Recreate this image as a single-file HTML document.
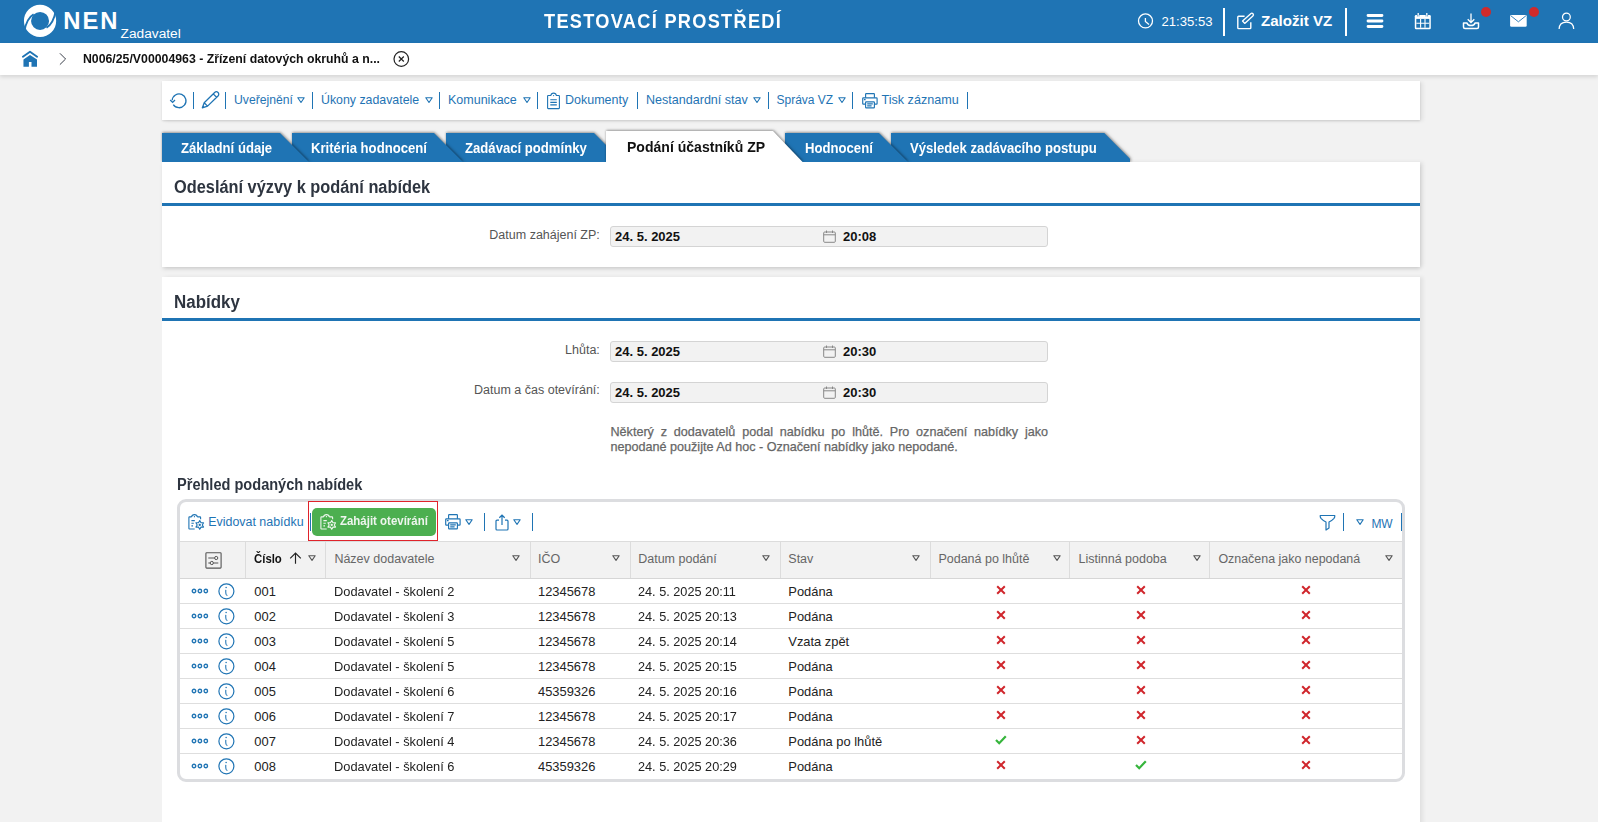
<!DOCTYPE html>
<html><head><meta charset="utf-8"><title>NEN</title>
<style>
html,body{margin:0;padding:0;}
body{width:1598px;height:822px;overflow:hidden;background:#f2f2f2;position:relative;font-family:"Liberation Sans",sans-serif;}
.t{position:absolute;white-space:nowrap;}
svg{overflow:visible;}
</style></head><body>
<div style="position:absolute;left:0px;top:0px;width:1598px;height:43px;background:#1f74b4"></div>
<svg style="position:absolute;left:22px;top:3px" width="36" height="36" viewBox="0 0 36 36"><circle cx="18.05" cy="17.95" r="12.55" fill="none" stroke="#fff" stroke-width="7.1"/><path d="M2.3 28.5 Q4.6 15.2 11.6 11.2" fill="none" stroke="#1f74b4" stroke-width="1.9"/><path d="M2.3 28.5 Q4.6 15.2 11.6 11.2" fill="none" stroke="#1f74b4" stroke-width="1.9" transform="rotate(180 18.05 17.95)"/></svg>
<div class="t" style="left:63.30px;top:9.15px;font-size:23.8px;line-height:23.8px;font-weight:700;color:#fff;letter-spacing:1.9px">NEN</div>
<div class="t" style="left:120.60px;top:27.00px;font-size:13.7px;line-height:13.7px;font-weight:400;color:#fff;">Zadavatel</div>
<div class="t" style="left:544.00px;top:11.20px;font-size:20.2px;line-height:20.2px;font-weight:700;color:#fff;letter-spacing:1.45px;transform:scaleX(0.9);transform-origin:0 0">TESTOVACÍ PROSTŘEDÍ</div>
<svg style="position:absolute;left:1137px;top:13px" width="17" height="17" viewBox="0 0 17 17"><circle cx="8.5" cy="7.9" r="7.0" fill="none" stroke="#fff" stroke-width="1.3"/><path d="M8.4 5.1 V8.4 L12 11.5" fill="none" stroke="#fff" stroke-width="1.3"/></svg>
<div class="t" style="left:1161.50px;top:15.11px;font-size:13.1px;line-height:13.1px;font-weight:400;color:#fff;">21:35:53</div>
<div style="position:absolute;left:1223px;top:8px;width:2.4px;height:28px;background:#fff"></div>
<svg style="position:absolute;left:1236px;top:12px" width="19" height="18" viewBox="0 0 19 18"><path d="M8.6 4.3 H2.6 Q1.8 4.3 1.8 5.1 V15.8 Q1.8 16.6 2.6 16.6 H14 Q14.8 16.6 14.8 15.8 V10.2" fill="none" stroke="#fff" stroke-width="1.4"/><g transform="translate(7.4,10.4) rotate(-42)"><path d="M0.3 -1.6 H11.3 A1.6 1.6 0 0 1 11.3 1.6 H0.3 Z" fill="none" stroke="#fff" stroke-width="1.35" stroke-linejoin="round"/></g></svg>
<div class="t" style="left:1261.00px;top:13.12px;font-size:15.1px;line-height:15.1px;font-weight:700;color:#fff;">Založit VZ</div>
<div style="position:absolute;left:1345px;top:8px;width:2.4px;height:28px;background:#fff"></div>
<svg style="position:absolute;left:1366px;top:13px" width="18" height="16" viewBox="0 0 18 16"><path d="M2 2.5 H16 M2 8 H16 M2 13.5 H16" stroke="#fff" stroke-width="2.8" stroke-linecap="round"/></svg>
<svg style="position:absolute;left:1414px;top:13px" width="18" height="17" viewBox="0 0 18 17"><rect x="0.8" y="2" width="16" height="14.2" rx="1.3" fill="#fff"/><rect x="2.3" y="5.9" width="13" height="8.8" fill="#1f74b4"/><path d="M6.6 5.9 V14.7 M11 5.9 V14.7 M2.3 10.3 H15.3" stroke="#fff" stroke-width="1.1"/><path d="M4.2 0 V3.2 M12.8 0 V3.2" stroke="#fff" stroke-width="1.3"/><path d="M3.4 2 V3.5 M5 2 V3.5 M12 2 V3.5 M13.6 2 V3.5" stroke="#1f74b4" stroke-width="0.6"/></svg>
<svg style="position:absolute;left:1462px;top:13px" width="18" height="17" viewBox="0 0 18 17"><path d="M9 0.5 V9 M5.7 6.2 L9 9.5 L12.3 6.2" fill="none" stroke="#fff" stroke-width="1.3"/><path d="M1.5 10 V14 Q1.5 15.5 3 15.5 H15 Q16.5 15.5 16.5 14 V10 H13 Q12.5 12.5 9 12.5 Q5.5 12.5 5 10 Z" fill="none" stroke="#fff" stroke-width="1.5" stroke-linejoin="round"/></svg>
<div style="position:absolute;left:1481px;top:7px;width:10px;height:10px;background:#cf2a2c;border-radius:50%"></div>
<svg style="position:absolute;left:1510px;top:14px" width="18" height="14" viewBox="0 0 18 14"><rect x="0.1" y="1" width="16.6" height="11.8" rx="1.3" fill="#fff"/><path d="M0.9 1.8 L8.4 7.8 L15.9 1.8" fill="none" stroke="#1f74b4" stroke-width="0.9"/></svg>
<div style="position:absolute;left:1529px;top:7px;width:10px;height:10px;background:#cf2a2c;border-radius:50%"></div>
<svg style="position:absolute;left:1558px;top:12px" width="17" height="18" viewBox="0 0 17 18"><circle cx="8.4" cy="5" r="3.9" fill="none" stroke="#fff" stroke-width="1.25"/><path d="M1.1 17 Q1.4 10.2 8.4 10.2 Q15.4 10.2 15.7 17" fill="none" stroke="#fff" stroke-width="1.25"/></svg>
<div style="position:absolute;left:0px;top:43px;width:1598px;height:32px;background:#fff;box-shadow:0 2px 4px rgba(0,0,0,.12)"></div>
<svg style="position:absolute;left:22px;top:51px" width="17" height="16" viewBox="0 0 17 16"><path d="M0.9 5.8 L8 0.7 L15.1 5.8" fill="none" stroke="#1f74b4" stroke-width="1.9" stroke-linecap="round" stroke-linejoin="round"/><path d="M1.45 8.4 L8 3.9 L15 8.4 V15.8 H9.5 V11.1 H6.9 V15.8 H1.45 Z" fill="#1f74b4"/></svg>
<svg style="position:absolute;left:58px;top:53px" width="9" height="13" viewBox="0 0 9 13"><path d="M1.9 0.3 L7.6 6 L1.9 11.6" fill="none" stroke="#3a3f4a" stroke-width="1"/></svg>
<div class="t" style="left:83.00px;top:52.20px;font-size:13px;line-height:13px;font-weight:700;color:#111;;transform:scaleX(0.945);transform-origin:0 0">N006/25/V00004963 - Zřízení datových okruhů a n...</div>
<svg style="position:absolute;left:393px;top:51px" width="17" height="17" viewBox="0 0 17 17"><circle cx="8.3" cy="8" r="7.3" fill="none" stroke="#222" stroke-width="1.2"/><path d="M5.8 5.5 L10.8 10.5 M10.8 5.5 L5.8 10.5" stroke="#222" stroke-width="1.2"/></svg>
<div style="position:absolute;left:162px;top:81px;width:1258px;height:39px;background:#fff;box-shadow:0 1px 2px rgba(0,0,0,.12), 3px 1px 4px rgba(0,0,0,.07)"></div>
<svg style="position:absolute;left:169px;top:92px" width="19" height="18" viewBox="0 0 19 18"><path d="M3.2 8.3 A6.9 6.9 0 1 1 4.3 12.6" fill="none" stroke="#1f74b4" stroke-width="1.3"/><path d="M1.2 8 L3.6 10.4 L6 8" fill="none" stroke="#1f74b4" stroke-width="1.3"/></svg>
<div style="position:absolute;left:193px;top:92px;width:1.3px;height:16.5px;background:#1f74b4"></div>
<svg style="position:absolute;left:201px;top:91px" width="19" height="19" viewBox="0 0 19 19"><g transform="translate(1.3,16.9) rotate(-44.3)"><path d="M0 0 L5 -2.4 H19.6 A2.4 2.4 0 0 1 19.6 2.4 H5 Z M5 -2.4 V2.4 M17.6 -2.4 V2.4" fill="none" stroke="#1f74b4" stroke-width="1.3" stroke-linejoin="round"/><path d="M0 0 L2.2 -1.05 V1.05 Z" fill="#1f74b4"/></g></svg>
<div style="position:absolute;left:225px;top:92px;width:1.3px;height:16.5px;background:#1f74b4"></div>
<div class="t" style="left:234.00px;top:93.97px;font-size:12.2px;line-height:12.2px;font-weight:400;color:#1f74b4;">Uveřejnění</div>
<svg style="position:absolute;left:296.5px;top:97px" width="8" height="6" viewBox="0 0 8 6"><path d="M0.8 0.8 H7.2 L4 5.5 Z" fill="none" stroke="#1f74b4" stroke-width="1.1" stroke-linejoin="round"/></svg>
<div style="position:absolute;left:312px;top:92px;width:1.3px;height:16.5px;background:#1f74b4"></div>
<div class="t" style="left:321.00px;top:93.85px;font-size:12.35px;line-height:12.35px;font-weight:400;color:#1f74b4;">Úkony zadavatele</div>
<svg style="position:absolute;left:424.5px;top:97px" width="8" height="6" viewBox="0 0 8 6"><path d="M0.8 0.8 H7.2 L4 5.5 Z" fill="none" stroke="#1f74b4" stroke-width="1.1" stroke-linejoin="round"/></svg>
<div style="position:absolute;left:438.5px;top:92px;width:1.3px;height:16.5px;background:#1f74b4"></div>
<div class="t" style="left:448.00px;top:93.72px;font-size:12.5px;line-height:12.5px;font-weight:400;color:#1f74b4;">Komunikace</div>
<svg style="position:absolute;left:522.5px;top:97px" width="8" height="6" viewBox="0 0 8 6"><path d="M0.8 0.8 H7.2 L4 5.5 Z" fill="none" stroke="#1f74b4" stroke-width="1.1" stroke-linejoin="round"/></svg>
<div style="position:absolute;left:536.5px;top:92px;width:1.3px;height:16.5px;background:#1f74b4"></div>
<svg style="position:absolute;left:546px;top:91px" width="15" height="19" viewBox="0 0 15 19"><g fill="none" stroke="#1f74b4" stroke-width="1.1" stroke-linejoin="round"><path d="M4.9 4.5 H2.2 Q1.6 4.5 1.6 5.1 V17 Q1.6 17.6 2.2 17.6 H12.8 Q13.4 17.6 13.4 17 V5.1 Q13.4 4.5 12.8 4.5 H10.3 Q10 2.1 7.6 2.1 Q5.2 2.1 4.9 4.5 Z"/><path d="M4.3 8.8 H10.8 M4.3 11.4 H10.8 M4.3 13.9 H10.8"/></g><circle cx="7.6" cy="4.6" r="0.6" fill="#1f74b4"/></svg>
<div class="t" style="left:565.00px;top:93.72px;font-size:12.5px;line-height:12.5px;font-weight:400;color:#1f74b4;">Dokumenty</div>
<div style="position:absolute;left:637px;top:92px;width:1.3px;height:16.5px;background:#1f74b4"></div>
<div class="t" style="left:646.00px;top:93.68px;font-size:12.55px;line-height:12.55px;font-weight:400;color:#1f74b4;">Nestandardní stav</div>
<svg style="position:absolute;left:753px;top:97px" width="8" height="6" viewBox="0 0 8 6"><path d="M0.8 0.8 H7.2 L4 5.5 Z" fill="none" stroke="#1f74b4" stroke-width="1.1" stroke-linejoin="round"/></svg>
<div style="position:absolute;left:767.5px;top:92px;width:1.3px;height:16.5px;background:#1f74b4"></div>
<div class="t" style="left:776.50px;top:94.14px;font-size:12.0px;line-height:12.0px;font-weight:400;color:#1f74b4;">Správa VZ</div>
<svg style="position:absolute;left:838px;top:97px" width="8" height="6" viewBox="0 0 8 6"><path d="M0.8 0.8 H7.2 L4 5.5 Z" fill="none" stroke="#1f74b4" stroke-width="1.1" stroke-linejoin="round"/></svg>
<div style="position:absolute;left:852px;top:92px;width:1.3px;height:16.5px;background:#1f74b4"></div>
<svg style="position:absolute;z-index:9;left:861px;top:92px" width="18" height="18" viewBox="0 0 18 18"><g fill="none" stroke="#1f74b4" stroke-width="1.15" stroke-linejoin="round"><path d="M4.6 5.8 V2.2 Q4.6 1.6 5.2 1.6 H12.8 Q13.4 1.6 13.4 2.2 V5.8"/><path d="M4.6 12.1 H2.3 Q1.7 12.1 1.7 11.5 V6.5 Q1.7 5.8 2.4 5.8 H15.4 Q16.1 5.8 16.1 6.5 V11.5 Q16.1 12.1 15.5 12.1 H13.4"/><rect x="4.6" y="9.8" width="8.8" height="6.1" rx="0.6"/><path d="M6.2 11.8 H11.8 M6.2 13.8 H10.6 M2.9 7.6 H4.6"/></g></svg>
<div class="t" style="left:881.50px;top:93.63px;font-size:12.6px;line-height:12.6px;font-weight:400;color:#1f74b4;">Tisk záznamu</div>
<div style="position:absolute;left:967px;top:92px;width:1.3px;height:16.5px;background:#1f74b4"></div>
<div style="position:absolute;left:0;top:100px;width:1598px;height:62px;overflow:hidden;z-index:10"><div style="position:absolute;left:0;top:-100px;width:1598px;height:822px"><div style="position:absolute;left:162px;top:133px;width:147px;height:29px;z-index:20;filter:drop-shadow(0 -1px 1px rgba(0,0,0,.2)) drop-shadow(1.6px 0.6px 1.6px rgba(0,0,0,.32))"><div style="width:100%;height:100%;background:#1f74b4;clip-path:polygon(0 0,118px 0,100% 29px,100% 100%,0 100%)"></div></div>
<div class="t" style="left:181.00px;top:140.53px;font-size:14.5px;line-height:14.5px;font-weight:700;color:#fff;z-index:21;transform:scaleX(0.905);transform-origin:0 0">Základní údaje</div>
<div style="position:absolute;left:292px;top:133px;width:171px;height:29px;z-index:18;filter:drop-shadow(0 -1px 1px rgba(0,0,0,.2)) drop-shadow(1.6px 0.6px 1.6px rgba(0,0,0,.32))"><div style="width:100%;height:100%;background:#1f74b4;clip-path:polygon(0 0,142px 0,100% 29px,100% 100%,0 100%)"></div></div>
<div class="t" style="left:311.40px;top:140.53px;font-size:14.5px;line-height:14.5px;font-weight:700;color:#fff;z-index:19;transform:scaleX(0.905);transform-origin:0 0">Kritéria hodnocení</div>
<div style="position:absolute;left:446px;top:133px;width:177px;height:29px;z-index:16;filter:drop-shadow(0 -1px 1px rgba(0,0,0,.2)) drop-shadow(1.6px 0.6px 1.6px rgba(0,0,0,.32))"><div style="width:100%;height:100%;background:#1f74b4;clip-path:polygon(0 0,148px 0,100% 29px,100% 100%,0 100%)"></div></div>
<div class="t" style="left:465.20px;top:140.53px;font-size:14.5px;line-height:14.5px;font-weight:700;color:#fff;z-index:17;transform:scaleX(0.905);transform-origin:0 0">Zadávací podmínky</div>
<div style="position:absolute;left:785px;top:133px;width:123px;height:29px;z-index:14;filter:drop-shadow(0 -1px 1px rgba(0,0,0,.2)) drop-shadow(1.6px 0.6px 1.6px rgba(0,0,0,.32))"><div style="width:100%;height:100%;background:#1f74b4;clip-path:polygon(0 0,94px 0,100% 29px,100% 100%,0 100%)"></div></div>
<div class="t" style="left:804.50px;top:140.53px;font-size:14.5px;line-height:14.5px;font-weight:700;color:#fff;z-index:15;transform:scaleX(0.905);transform-origin:0 0">Hodnocení</div>
<div style="position:absolute;left:891px;top:133px;width:239.0px;height:29px;z-index:12;filter:drop-shadow(0 -1px 1px rgba(0,0,0,.2)) drop-shadow(1.6px 0.6px 1.6px rgba(0,0,0,.32))"><div style="width:100%;height:100%;background:#1f74b4;clip-path:polygon(0 0,213.29999999999995px 0,100% 25.7px,100% 100%,0 100%)"></div></div>
<div class="t" style="left:910.00px;top:140.53px;font-size:14.5px;line-height:14.5px;font-weight:700;color:#fff;z-index:13;transform:scaleX(0.905);transform-origin:0 0">Výsledek zadávacího postupu</div>
<div style="position:absolute;left:606px;top:131px;width:196.60000000000002px;height:31px;z-index:30;filter:drop-shadow(0 -1px 1px rgba(0,0,0,.2)) drop-shadow(1.6px 0.6px 1.6px rgba(0,0,0,.32))"><div style="width:100%;height:100%;background:#fff;clip-path:polygon(0 0,167px 0,100% 31px,100% 100%,0 100%)"></div></div>
<div class="t" style="left:626.60px;top:139.00px;font-size:15px;line-height:15px;font-weight:700;color:#111;z-index:31;transform:scaleX(0.936);transform-origin:0 0">Podání účastníků ZP</div>
</div></div><div style="position:absolute;left:162px;top:162px;width:1258px;height:104.5px;background:#fff;box-shadow:0 2.5px 4px -0.5px rgba(0,0,0,.13), 3px 0 4px rgba(0,0,0,.07);z-index:5"></div>
<div class="t" style="left:174.00px;top:177.66px;font-size:18px;line-height:18px;font-weight:700;color:#2e3540;z-index:6;transform:scaleX(0.908);transform-origin:0 0">Odeslání výzvy k podání nabídek</div>
<div style="position:absolute;left:162px;top:203px;width:1258px;height:3px;background:#1f74b4;z-index:6"></div>
<div class="t" style="right:998.20px;text-align:right;top:229.22px;font-size:12.5px;line-height:12.5px;font-weight:400;color:#555;z-index:7">Datum zahájení ZP:</div>
<div style="position:absolute;left:610px;top:226px;width:438px;height:20.5px;box-sizing:border-box;background:#f2f2f2;border:1px solid #d4d4d4;border-radius:3px;z-index:6"></div>
<div class="t" style="left:615.00px;top:230.00px;font-size:13px;line-height:13px;font-weight:700;color:#111;z-index:7">24. 5. 2025</div>
<svg style="position:absolute;z-index:7;left:823px;top:230px" width="13" height="13" viewBox="0 0 13 13"><rect x="0.7" y="2" width="11.6" height="10.3" rx="1" fill="none" stroke="#888" stroke-width="1"/><path d="M0.7 4.8 H12.3 M3.5 0.5 V3 M9.5 0.5 V3" stroke="#888" stroke-width="1"/></svg>
<div class="t" style="left:843.00px;top:230.00px;font-size:13px;line-height:13px;font-weight:700;color:#111;z-index:7">20:08</div>
<div style="position:absolute;left:162px;top:277px;width:1258px;height:560px;background:#fff;box-shadow:3px 0 4px rgba(0,0,0,.07);z-index:5"></div>
<div class="t" style="left:174.00px;top:292.76px;font-size:18px;line-height:18px;font-weight:700;color:#2e3540;z-index:6;transform:scaleX(0.94);transform-origin:0 0">Nabídky</div>
<div style="position:absolute;left:162px;top:318px;width:1258px;height:3px;background:#1f74b4;z-index:6"></div>
<div class="t" style="right:998.20px;text-align:right;top:343.62px;font-size:12.5px;line-height:12.5px;font-weight:400;color:#555;z-index:7">Lhůta:</div>
<div style="position:absolute;left:610px;top:341px;width:438px;height:20.5px;box-sizing:border-box;background:#f2f2f2;border:1px solid #d4d4d4;border-radius:3px;z-index:6"></div>
<div class="t" style="left:615.00px;top:345.00px;font-size:13px;line-height:13px;font-weight:700;color:#111;z-index:7">24. 5. 2025</div>
<svg style="position:absolute;z-index:7;left:823px;top:345px" width="13" height="13" viewBox="0 0 13 13"><rect x="0.7" y="2" width="11.6" height="10.3" rx="1" fill="none" stroke="#888" stroke-width="1"/><path d="M0.7 4.8 H12.3 M3.5 0.5 V3 M9.5 0.5 V3" stroke="#888" stroke-width="1"/></svg>
<div class="t" style="left:843.00px;top:345.00px;font-size:13px;line-height:13px;font-weight:700;color:#111;z-index:7">20:30</div>
<div class="t" style="right:998.20px;text-align:right;top:384.22px;font-size:12.5px;line-height:12.5px;font-weight:400;color:#555;z-index:7">Datum a čas otevírání:</div>
<div style="position:absolute;left:610px;top:382px;width:438px;height:20.5px;box-sizing:border-box;background:#f2f2f2;border:1px solid #d4d4d4;border-radius:3px;z-index:6"></div>
<div class="t" style="left:615.00px;top:386.00px;font-size:13px;line-height:13px;font-weight:700;color:#111;z-index:7">24. 5. 2025</div>
<svg style="position:absolute;z-index:7;left:823px;top:386px" width="13" height="13" viewBox="0 0 13 13"><rect x="0.7" y="2" width="11.6" height="10.3" rx="1" fill="none" stroke="#888" stroke-width="1"/><path d="M0.7 4.8 H12.3 M3.5 0.5 V3 M9.5 0.5 V3" stroke="#888" stroke-width="1"/></svg>
<div class="t" style="left:843.00px;top:386.00px;font-size:13px;line-height:13px;font-weight:700;color:#111;z-index:7">20:30</div>
<div class="t" style="left:610.5px;top:425.3px;width:437.5px;font-size:12.6px;line-height:15px;color:#666;-webkit-text-stroke:0.25px #666;text-align:justify;text-align-last:left;white-space:normal;z-index:7">Některý z dodavatelů podal nabídku po lhůtě. Pro označení nabídky jako nepodané použijte Ad hoc - Označení nabídky jako nepodané.</div>
<div class="t" style="left:177.00px;top:477.06px;font-size:16px;line-height:16px;font-weight:700;color:#2e3540;z-index:7;transform:scaleX(0.91);transform-origin:0 0">Přehled podaných nabídek</div>
<div style="position:absolute;left:177px;top:499px;width:1228px;height:283px;box-sizing:border-box;border:3px solid #dcdde0;border-radius:9px;background:#fff;z-index:7"></div>
<svg style="position:absolute;z-index:9;left:183px;top:508px" width="27" height="27" viewBox="0 0 27 27"><g fill="none" stroke="#1f74b4" stroke-width="1.1" stroke-linejoin="round"><path d="M14.3 8.9 H17 Q17.6 8.9 17.6 9.5 V11.2 M8.6 8.9 H6.5 Q5.9 8.9 5.9 9.5 V20.4 Q5.9 21 6.5 21 H11.7 M8.6 8.9 Q8.9 6.6 11.45 6.6 Q14 6.6 14.3 8.9"/><path d="M8.4 12.6 H11.8 M8.4 15.3 H10.8 M8.4 17.9 H10"/><polygon points="16.75,12.50 18.02,14.69 20.56,14.70 19.30,16.90 20.56,19.10 18.02,19.11 16.75,21.30 15.48,19.11 12.94,19.10 14.20,16.90 12.94,14.70 15.47,14.69"/></g><circle cx="11.45" cy="8.7" r="0.65" fill="#1f74b4"/><circle cx="16.75" cy="16.9" r="1.15" fill="#1f74b4"/></svg>
<div class="t" style="left:208.20px;top:516.26px;font-size:12.45px;line-height:12.45px;font-weight:400;color:#1f74b4;z-index:8;">Evidovat nabídku</div>
<div style="position:absolute;left:310px;top:513px;width:1.3px;height:17.7px;background:#1f74b4;z-index:8;"></div>
<div style="position:absolute;left:308px;top:501px;width:130px;height:40px;box-sizing:border-box;border:1px solid #e0232b;z-index:8;"></div>
<div style="position:absolute;left:312.2px;top:508.2px;width:124px;height:27.6px;background:#4caf50;border-radius:5px;z-index:8;"></div>
<svg style="position:absolute;z-index:9;left:314.5px;top:507.8px" width="27" height="27" viewBox="0 0 27 27"><g fill="none" stroke="#eef6ee" stroke-width="1.1" stroke-linejoin="round"><path d="M14.3 8.9 H17 Q17.6 8.9 17.6 9.5 V11.2 M8.6 8.9 H6.5 Q5.9 8.9 5.9 9.5 V20.4 Q5.9 21 6.5 21 H11.7 M8.6 8.9 Q8.9 6.6 11.45 6.6 Q14 6.6 14.3 8.9"/><path d="M8.4 12.6 H11.8 M8.4 15.3 H10.8 M8.4 17.9 H10"/><polygon points="16.75,12.50 18.02,14.69 20.56,14.70 19.30,16.90 20.56,19.10 18.02,19.11 16.75,21.30 15.48,19.11 12.94,19.10 14.20,16.90 12.94,14.70 15.47,14.69"/></g><circle cx="11.45" cy="8.7" r="0.65" fill="#eef6ee"/><circle cx="16.75" cy="16.9" r="1.15" fill="#eef6ee"/></svg>
<div class="t" style="left:339.70px;top:515.36px;font-size:12.8px;line-height:12.8px;font-weight:700;color:#eef5ee;z-index:9;transform:scaleX(0.895);transform-origin:0 0">Zahájit otevírání</div>
<svg style="position:absolute;z-index:9;left:444px;top:513px" width="18" height="18" viewBox="0 0 18 18"><g fill="none" stroke="#1f74b4" stroke-width="1.15" stroke-linejoin="round"><path d="M4.6 5.8 V2.2 Q4.6 1.6 5.2 1.6 H12.8 Q13.4 1.6 13.4 2.2 V5.8"/><path d="M4.6 12.1 H2.3 Q1.7 12.1 1.7 11.5 V6.5 Q1.7 5.8 2.4 5.8 H15.4 Q16.1 5.8 16.1 6.5 V11.5 Q16.1 12.1 15.5 12.1 H13.4"/><rect x="4.6" y="9.8" width="8.8" height="6.1" rx="0.6"/><path d="M6.2 11.8 H11.8 M6.2 13.8 H10.6 M2.9 7.6 H4.6"/></g></svg>
<svg style="position:absolute;z-index:9;left:465.2px;top:519px" width="8" height="6" viewBox="0 0 8 6"><path d="M0.8 0.8 H7.2 L4 5.4 Z" fill="none" stroke="#1f74b4" stroke-width="1.1" stroke-linejoin="round"/></svg>
<div style="position:absolute;left:484px;top:513px;width:1.3px;height:17.7px;background:#1f74b4;z-index:8;"></div>
<svg style="position:absolute;z-index:9;left:494.5px;top:513.5px" width="14" height="17" viewBox="0 0 14 17"><path d="M4 6.2 H2 Q1 6.2 1 7.2 V15 Q1 16 2 16 H12 Q13 16 13 15 V7.2 Q13 6.2 12 6.2 H10" fill="none" stroke="#1f74b4" stroke-width="1.2"/><path d="M7 11 V1.2 M4.3 3.8 L7 1.2 L9.7 3.8" fill="none" stroke="#1f74b4" stroke-width="1.2"/></svg>
<svg style="position:absolute;z-index:9;left:513px;top:519px" width="8" height="6" viewBox="0 0 8 6"><path d="M0.8 0.8 H7.2 L4 5.4 Z" fill="none" stroke="#1f74b4" stroke-width="1.1" stroke-linejoin="round"/></svg>
<div style="position:absolute;left:532px;top:513px;width:1.3px;height:17.7px;background:#1f74b4;z-index:8;"></div>
<svg style="position:absolute;z-index:9;left:1319px;top:513.5px" width="17" height="17" viewBox="0 0 17 17"><path d="M1.2 1.5 H15.8 Q16 3 15 4.3 Q13 6.5 10 8 V14 L7 16 V8 Q4 6.5 2 4.3 Q1 3 1.2 1.5 Z" fill="none" stroke="#1f74b4" stroke-width="1.2" stroke-linejoin="round"/></svg>
<div style="position:absolute;left:1343px;top:513px;width:1.3px;height:17.7px;background:#1f74b4;z-index:8;"></div>
<svg style="position:absolute;z-index:9;left:1355.5px;top:519px" width="8" height="6" viewBox="0 0 8 6"><path d="M0.8 0.8 H7.2 L4 5.4 Z" fill="none" stroke="#1f74b4" stroke-width="1.1" stroke-linejoin="round"/></svg>
<div class="t" style="left:1371.50px;top:517.64px;font-size:12px;line-height:12px;font-weight:400;color:#1f74b4;z-index:8;letter-spacing:-0.3px">MW</div>
<div style="position:absolute;left:1401px;top:513px;width:1.3px;height:17.7px;background:#1f74b4;z-index:8;"></div>
<div style="position:absolute;left:180px;top:541px;width:1222px;height:37.5px;background:#f2f2f2;border-top:1px solid #dcdcdc;border-bottom:1.3px solid #d6d6d6;box-sizing:border-box;z-index:8;"></div>
<div style="position:absolute;left:245.4px;top:542px;width:1px;height:36px;background:#dcdcdc;z-index:8;"></div>
<div style="position:absolute;left:325.1px;top:542px;width:1px;height:36px;background:#dcdcdc;z-index:8;"></div>
<div style="position:absolute;left:529.5px;top:542px;width:1px;height:36px;background:#dcdcdc;z-index:8;"></div>
<div style="position:absolute;left:629.5px;top:542px;width:1px;height:36px;background:#dcdcdc;z-index:8;"></div>
<div style="position:absolute;left:779.5px;top:542px;width:1px;height:36px;background:#dcdcdc;z-index:8;"></div>
<div style="position:absolute;left:929.5px;top:542px;width:1px;height:36px;background:#dcdcdc;z-index:8;"></div>
<div style="position:absolute;left:1069.3px;top:542px;width:1px;height:36px;background:#dcdcdc;z-index:8;"></div>
<div style="position:absolute;left:1209.2px;top:542px;width:1px;height:36px;background:#dcdcdc;z-index:8;"></div>
<svg style="position:absolute;z-index:9;left:204.5px;top:551.5px" width="17" height="17" viewBox="0 0 17 17"><rect x="0.9" y="0.7" width="15.2" height="15.4" rx="0.8" fill="none" stroke="#555" stroke-width="1.1"/><path d="M3.3 6 H9.6 M3.3 11 H5.2 M8.5 11 H13.3" stroke="#555" stroke-width="1"/><circle cx="11.2" cy="6" r="1.6" fill="none" stroke="#555" stroke-width="1"/><circle cx="6.8" cy="11" r="1.6" fill="none" stroke="#555" stroke-width="1"/></svg>
<div class="t" style="left:253.60px;top:551.50px;font-size:13px;line-height:13px;font-weight:700;color:#111;z-index:8;;transform:scaleX(0.875);transform-origin:0 0">Číslo</div>
<svg style="position:absolute;z-index:9;left:288.5px;top:551.5px" width="13" height="12" viewBox="0 0 13 12"><path d="M6.5 11.8 V1.2 M1.2 6.3 L6.5 1 L11.8 6.3" fill="none" stroke="#222" stroke-width="1.15"/></svg>
<div class="t" style="left:334.40px;top:552.92px;font-size:12.5px;line-height:12.5px;font-weight:400;color:#666;z-index:8;">Název dodavatele</div>
<div class="t" style="left:538.00px;top:552.92px;font-size:12.5px;line-height:12.5px;font-weight:400;color:#666;z-index:8;">IČO</div>
<div class="t" style="left:638.20px;top:552.92px;font-size:12.5px;line-height:12.5px;font-weight:400;color:#666;z-index:8;">Datum podání</div>
<div class="t" style="left:788.30px;top:552.92px;font-size:12.5px;line-height:12.5px;font-weight:400;color:#666;z-index:8;">Stav</div>
<div class="t" style="left:938.40px;top:552.92px;font-size:12.5px;line-height:12.5px;font-weight:400;color:#666;z-index:8;">Podaná po lhůtě</div>
<div class="t" style="left:1078.50px;top:552.92px;font-size:12.5px;line-height:12.5px;font-weight:400;color:#666;z-index:8;">Listinná podoba</div>
<div class="t" style="left:1218.40px;top:552.96px;font-size:12.45px;line-height:12.45px;font-weight:400;color:#666;z-index:8;">Označena jako nepodaná</div>
<svg style="position:absolute;z-index:9;left:308.4px;top:555px" width="8" height="6" viewBox="0 0 8 6"><path d="M0.8 0.8 H7.2 L4 5.4 Z" fill="none" stroke="#555" stroke-width="1.1" stroke-linejoin="round"/></svg>
<svg style="position:absolute;z-index:9;left:512.4px;top:555px" width="8" height="6" viewBox="0 0 8 6"><path d="M0.8 0.8 H7.2 L4 5.4 Z" fill="none" stroke="#555" stroke-width="1.1" stroke-linejoin="round"/></svg>
<svg style="position:absolute;z-index:9;left:612.3px;top:555px" width="8" height="6" viewBox="0 0 8 6"><path d="M0.8 0.8 H7.2 L4 5.4 Z" fill="none" stroke="#555" stroke-width="1.1" stroke-linejoin="round"/></svg>
<svg style="position:absolute;z-index:9;left:762px;top:555px" width="8" height="6" viewBox="0 0 8 6"><path d="M0.8 0.8 H7.2 L4 5.4 Z" fill="none" stroke="#555" stroke-width="1.1" stroke-linejoin="round"/></svg>
<svg style="position:absolute;z-index:9;left:912.2px;top:555px" width="8" height="6" viewBox="0 0 8 6"><path d="M0.8 0.8 H7.2 L4 5.4 Z" fill="none" stroke="#555" stroke-width="1.1" stroke-linejoin="round"/></svg>
<svg style="position:absolute;z-index:9;left:1052.5px;top:555px" width="8" height="6" viewBox="0 0 8 6"><path d="M0.8 0.8 H7.2 L4 5.4 Z" fill="none" stroke="#555" stroke-width="1.1" stroke-linejoin="round"/></svg>
<svg style="position:absolute;z-index:9;left:1193px;top:555px" width="8" height="6" viewBox="0 0 8 6"><path d="M0.8 0.8 H7.2 L4 5.4 Z" fill="none" stroke="#555" stroke-width="1.1" stroke-linejoin="round"/></svg>
<svg style="position:absolute;z-index:9;left:1384.6px;top:555px" width="8" height="6" viewBox="0 0 8 6"><path d="M0.8 0.8 H7.2 L4 5.4 Z" fill="none" stroke="#555" stroke-width="1.1" stroke-linejoin="round"/></svg>
<div style="position:absolute;left:180px;top:603px;width:1222px;height:1px;background:#dedede;z-index:8;"></div>
<svg style="position:absolute;z-index:9;left:191px;top:587.8px" width="18" height="6" viewBox="0 0 18 6"><circle cx="3.0" cy="3" r="1.75" fill="none" stroke="#1f74b4" stroke-width="1.3"/><circle cx="8.9" cy="3" r="1.75" fill="none" stroke="#1f74b4" stroke-width="1.3"/><circle cx="14.8" cy="3" r="1.75" fill="none" stroke="#1f74b4" stroke-width="1.3"/></svg>
<svg style="position:absolute;z-index:9;left:217.5px;top:582.5px" width="17" height="17" viewBox="0 0 17 17"><circle cx="8.4" cy="8.3" r="7.5" fill="none" stroke="#1f74b4" stroke-width="1.2"/><circle cx="8.1" cy="4.5" r="0.75" fill="#1f74b4"/><path d="M7.8 6.9 Q7.6 9.5 8 11.2 Q8.3 12.2 9.4 12.6" fill="none" stroke="#1f74b4" stroke-width="1.05"/></svg>
<div class="t" style="left:254.30px;top:586.08px;font-size:12.9px;line-height:12.9px;font-weight:400;color:#222;z-index:8;">001</div>
<div class="t" style="left:334.40px;top:586.08px;font-size:12.9px;line-height:12.9px;font-weight:400;color:#222;z-index:8;;transform:scaleX(0.995);transform-origin:0 0">Dodavatel - školení 2</div>
<div class="t" style="left:538.00px;top:586.08px;font-size:12.9px;line-height:12.9px;font-weight:400;color:#222;z-index:8;">12345678</div>
<div class="t" style="left:638.20px;top:586.08px;font-size:12.9px;line-height:12.9px;font-weight:400;color:#222;z-index:8;;transform:scaleX(0.985);transform-origin:0 0">24. 5. 2025 20:11</div>
<div class="t" style="left:788.30px;top:586.08px;font-size:12.9px;line-height:12.9px;font-weight:400;color:#222;z-index:8;">Podána</div>
<svg style="position:absolute;z-index:9;left:995.5px;top:584.9px" width="10" height="10" viewBox="0 0 10 10"><path d="M1.2 1.2 L8.8 8.8 M8.8 1.2 L1.2 8.8" stroke="#d0262c" stroke-width="2"/></svg>
<svg style="position:absolute;z-index:9;left:1135.5px;top:584.9px" width="10" height="10" viewBox="0 0 10 10"><path d="M1.2 1.2 L8.8 8.8 M8.8 1.2 L1.2 8.8" stroke="#d0262c" stroke-width="2"/></svg>
<svg style="position:absolute;z-index:9;left:1301.4px;top:584.9px" width="10" height="10" viewBox="0 0 10 10"><path d="M1.2 1.2 L8.8 8.8 M8.8 1.2 L1.2 8.8" stroke="#d0262c" stroke-width="2"/></svg>
<div style="position:absolute;left:180px;top:628px;width:1222px;height:1px;background:#dedede;z-index:8;"></div>
<svg style="position:absolute;z-index:9;left:191px;top:612.8px" width="18" height="6" viewBox="0 0 18 6"><circle cx="3.0" cy="3" r="1.75" fill="none" stroke="#1f74b4" stroke-width="1.3"/><circle cx="8.9" cy="3" r="1.75" fill="none" stroke="#1f74b4" stroke-width="1.3"/><circle cx="14.8" cy="3" r="1.75" fill="none" stroke="#1f74b4" stroke-width="1.3"/></svg>
<svg style="position:absolute;z-index:9;left:217.5px;top:607.5px" width="17" height="17" viewBox="0 0 17 17"><circle cx="8.4" cy="8.3" r="7.5" fill="none" stroke="#1f74b4" stroke-width="1.2"/><circle cx="8.1" cy="4.5" r="0.75" fill="#1f74b4"/><path d="M7.8 6.9 Q7.6 9.5 8 11.2 Q8.3 12.2 9.4 12.6" fill="none" stroke="#1f74b4" stroke-width="1.05"/></svg>
<div class="t" style="left:254.30px;top:611.08px;font-size:12.9px;line-height:12.9px;font-weight:400;color:#222;z-index:8;">002</div>
<div class="t" style="left:334.40px;top:611.08px;font-size:12.9px;line-height:12.9px;font-weight:400;color:#222;z-index:8;;transform:scaleX(0.995);transform-origin:0 0">Dodavatel - školení 3</div>
<div class="t" style="left:538.00px;top:611.08px;font-size:12.9px;line-height:12.9px;font-weight:400;color:#222;z-index:8;">12345678</div>
<div class="t" style="left:638.20px;top:611.08px;font-size:12.9px;line-height:12.9px;font-weight:400;color:#222;z-index:8;;transform:scaleX(0.985);transform-origin:0 0">24. 5. 2025 20:13</div>
<div class="t" style="left:788.30px;top:611.08px;font-size:12.9px;line-height:12.9px;font-weight:400;color:#222;z-index:8;">Podána</div>
<svg style="position:absolute;z-index:9;left:995.5px;top:609.9px" width="10" height="10" viewBox="0 0 10 10"><path d="M1.2 1.2 L8.8 8.8 M8.8 1.2 L1.2 8.8" stroke="#d0262c" stroke-width="2"/></svg>
<svg style="position:absolute;z-index:9;left:1135.5px;top:609.9px" width="10" height="10" viewBox="0 0 10 10"><path d="M1.2 1.2 L8.8 8.8 M8.8 1.2 L1.2 8.8" stroke="#d0262c" stroke-width="2"/></svg>
<svg style="position:absolute;z-index:9;left:1301.4px;top:609.9px" width="10" height="10" viewBox="0 0 10 10"><path d="M1.2 1.2 L8.8 8.8 M8.8 1.2 L1.2 8.8" stroke="#d0262c" stroke-width="2"/></svg>
<div style="position:absolute;left:180px;top:653px;width:1222px;height:1px;background:#dedede;z-index:8;"></div>
<svg style="position:absolute;z-index:9;left:191px;top:637.8px" width="18" height="6" viewBox="0 0 18 6"><circle cx="3.0" cy="3" r="1.75" fill="none" stroke="#1f74b4" stroke-width="1.3"/><circle cx="8.9" cy="3" r="1.75" fill="none" stroke="#1f74b4" stroke-width="1.3"/><circle cx="14.8" cy="3" r="1.75" fill="none" stroke="#1f74b4" stroke-width="1.3"/></svg>
<svg style="position:absolute;z-index:9;left:217.5px;top:632.5px" width="17" height="17" viewBox="0 0 17 17"><circle cx="8.4" cy="8.3" r="7.5" fill="none" stroke="#1f74b4" stroke-width="1.2"/><circle cx="8.1" cy="4.5" r="0.75" fill="#1f74b4"/><path d="M7.8 6.9 Q7.6 9.5 8 11.2 Q8.3 12.2 9.4 12.6" fill="none" stroke="#1f74b4" stroke-width="1.05"/></svg>
<div class="t" style="left:254.30px;top:636.08px;font-size:12.9px;line-height:12.9px;font-weight:400;color:#222;z-index:8;">003</div>
<div class="t" style="left:334.40px;top:636.08px;font-size:12.9px;line-height:12.9px;font-weight:400;color:#222;z-index:8;;transform:scaleX(0.995);transform-origin:0 0">Dodavatel - školení 5</div>
<div class="t" style="left:538.00px;top:636.08px;font-size:12.9px;line-height:12.9px;font-weight:400;color:#222;z-index:8;">12345678</div>
<div class="t" style="left:638.20px;top:636.08px;font-size:12.9px;line-height:12.9px;font-weight:400;color:#222;z-index:8;;transform:scaleX(0.985);transform-origin:0 0">24. 5. 2025 20:14</div>
<div class="t" style="left:788.30px;top:636.08px;font-size:12.9px;line-height:12.9px;font-weight:400;color:#222;z-index:8;">Vzata zpět</div>
<svg style="position:absolute;z-index:9;left:995.5px;top:634.9px" width="10" height="10" viewBox="0 0 10 10"><path d="M1.2 1.2 L8.8 8.8 M8.8 1.2 L1.2 8.8" stroke="#d0262c" stroke-width="2"/></svg>
<svg style="position:absolute;z-index:9;left:1135.5px;top:634.9px" width="10" height="10" viewBox="0 0 10 10"><path d="M1.2 1.2 L8.8 8.8 M8.8 1.2 L1.2 8.8" stroke="#d0262c" stroke-width="2"/></svg>
<svg style="position:absolute;z-index:9;left:1301.4px;top:634.9px" width="10" height="10" viewBox="0 0 10 10"><path d="M1.2 1.2 L8.8 8.8 M8.8 1.2 L1.2 8.8" stroke="#d0262c" stroke-width="2"/></svg>
<div style="position:absolute;left:180px;top:678px;width:1222px;height:1px;background:#dedede;z-index:8;"></div>
<svg style="position:absolute;z-index:9;left:191px;top:662.8px" width="18" height="6" viewBox="0 0 18 6"><circle cx="3.0" cy="3" r="1.75" fill="none" stroke="#1f74b4" stroke-width="1.3"/><circle cx="8.9" cy="3" r="1.75" fill="none" stroke="#1f74b4" stroke-width="1.3"/><circle cx="14.8" cy="3" r="1.75" fill="none" stroke="#1f74b4" stroke-width="1.3"/></svg>
<svg style="position:absolute;z-index:9;left:217.5px;top:657.5px" width="17" height="17" viewBox="0 0 17 17"><circle cx="8.4" cy="8.3" r="7.5" fill="none" stroke="#1f74b4" stroke-width="1.2"/><circle cx="8.1" cy="4.5" r="0.75" fill="#1f74b4"/><path d="M7.8 6.9 Q7.6 9.5 8 11.2 Q8.3 12.2 9.4 12.6" fill="none" stroke="#1f74b4" stroke-width="1.05"/></svg>
<div class="t" style="left:254.30px;top:661.08px;font-size:12.9px;line-height:12.9px;font-weight:400;color:#222;z-index:8;">004</div>
<div class="t" style="left:334.40px;top:661.08px;font-size:12.9px;line-height:12.9px;font-weight:400;color:#222;z-index:8;;transform:scaleX(0.995);transform-origin:0 0">Dodavatel - školení 5</div>
<div class="t" style="left:538.00px;top:661.08px;font-size:12.9px;line-height:12.9px;font-weight:400;color:#222;z-index:8;">12345678</div>
<div class="t" style="left:638.20px;top:661.08px;font-size:12.9px;line-height:12.9px;font-weight:400;color:#222;z-index:8;;transform:scaleX(0.985);transform-origin:0 0">24. 5. 2025 20:15</div>
<div class="t" style="left:788.30px;top:661.08px;font-size:12.9px;line-height:12.9px;font-weight:400;color:#222;z-index:8;">Podána</div>
<svg style="position:absolute;z-index:9;left:995.5px;top:659.9px" width="10" height="10" viewBox="0 0 10 10"><path d="M1.2 1.2 L8.8 8.8 M8.8 1.2 L1.2 8.8" stroke="#d0262c" stroke-width="2"/></svg>
<svg style="position:absolute;z-index:9;left:1135.5px;top:659.9px" width="10" height="10" viewBox="0 0 10 10"><path d="M1.2 1.2 L8.8 8.8 M8.8 1.2 L1.2 8.8" stroke="#d0262c" stroke-width="2"/></svg>
<svg style="position:absolute;z-index:9;left:1301.4px;top:659.9px" width="10" height="10" viewBox="0 0 10 10"><path d="M1.2 1.2 L8.8 8.8 M8.8 1.2 L1.2 8.8" stroke="#d0262c" stroke-width="2"/></svg>
<div style="position:absolute;left:180px;top:703px;width:1222px;height:1px;background:#dedede;z-index:8;"></div>
<svg style="position:absolute;z-index:9;left:191px;top:687.8px" width="18" height="6" viewBox="0 0 18 6"><circle cx="3.0" cy="3" r="1.75" fill="none" stroke="#1f74b4" stroke-width="1.3"/><circle cx="8.9" cy="3" r="1.75" fill="none" stroke="#1f74b4" stroke-width="1.3"/><circle cx="14.8" cy="3" r="1.75" fill="none" stroke="#1f74b4" stroke-width="1.3"/></svg>
<svg style="position:absolute;z-index:9;left:217.5px;top:682.5px" width="17" height="17" viewBox="0 0 17 17"><circle cx="8.4" cy="8.3" r="7.5" fill="none" stroke="#1f74b4" stroke-width="1.2"/><circle cx="8.1" cy="4.5" r="0.75" fill="#1f74b4"/><path d="M7.8 6.9 Q7.6 9.5 8 11.2 Q8.3 12.2 9.4 12.6" fill="none" stroke="#1f74b4" stroke-width="1.05"/></svg>
<div class="t" style="left:254.30px;top:686.08px;font-size:12.9px;line-height:12.9px;font-weight:400;color:#222;z-index:8;">005</div>
<div class="t" style="left:334.40px;top:686.08px;font-size:12.9px;line-height:12.9px;font-weight:400;color:#222;z-index:8;;transform:scaleX(0.995);transform-origin:0 0">Dodavatel - školení 6</div>
<div class="t" style="left:538.00px;top:686.08px;font-size:12.9px;line-height:12.9px;font-weight:400;color:#222;z-index:8;">45359326</div>
<div class="t" style="left:638.20px;top:686.08px;font-size:12.9px;line-height:12.9px;font-weight:400;color:#222;z-index:8;;transform:scaleX(0.985);transform-origin:0 0">24. 5. 2025 20:16</div>
<div class="t" style="left:788.30px;top:686.08px;font-size:12.9px;line-height:12.9px;font-weight:400;color:#222;z-index:8;">Podána</div>
<svg style="position:absolute;z-index:9;left:995.5px;top:684.9px" width="10" height="10" viewBox="0 0 10 10"><path d="M1.2 1.2 L8.8 8.8 M8.8 1.2 L1.2 8.8" stroke="#d0262c" stroke-width="2"/></svg>
<svg style="position:absolute;z-index:9;left:1135.5px;top:684.9px" width="10" height="10" viewBox="0 0 10 10"><path d="M1.2 1.2 L8.8 8.8 M8.8 1.2 L1.2 8.8" stroke="#d0262c" stroke-width="2"/></svg>
<svg style="position:absolute;z-index:9;left:1301.4px;top:684.9px" width="10" height="10" viewBox="0 0 10 10"><path d="M1.2 1.2 L8.8 8.8 M8.8 1.2 L1.2 8.8" stroke="#d0262c" stroke-width="2"/></svg>
<div style="position:absolute;left:180px;top:728px;width:1222px;height:1px;background:#dedede;z-index:8;"></div>
<svg style="position:absolute;z-index:9;left:191px;top:712.8px" width="18" height="6" viewBox="0 0 18 6"><circle cx="3.0" cy="3" r="1.75" fill="none" stroke="#1f74b4" stroke-width="1.3"/><circle cx="8.9" cy="3" r="1.75" fill="none" stroke="#1f74b4" stroke-width="1.3"/><circle cx="14.8" cy="3" r="1.75" fill="none" stroke="#1f74b4" stroke-width="1.3"/></svg>
<svg style="position:absolute;z-index:9;left:217.5px;top:707.5px" width="17" height="17" viewBox="0 0 17 17"><circle cx="8.4" cy="8.3" r="7.5" fill="none" stroke="#1f74b4" stroke-width="1.2"/><circle cx="8.1" cy="4.5" r="0.75" fill="#1f74b4"/><path d="M7.8 6.9 Q7.6 9.5 8 11.2 Q8.3 12.2 9.4 12.6" fill="none" stroke="#1f74b4" stroke-width="1.05"/></svg>
<div class="t" style="left:254.30px;top:711.08px;font-size:12.9px;line-height:12.9px;font-weight:400;color:#222;z-index:8;">006</div>
<div class="t" style="left:334.40px;top:711.08px;font-size:12.9px;line-height:12.9px;font-weight:400;color:#222;z-index:8;;transform:scaleX(0.995);transform-origin:0 0">Dodavatel - školení 7</div>
<div class="t" style="left:538.00px;top:711.08px;font-size:12.9px;line-height:12.9px;font-weight:400;color:#222;z-index:8;">12345678</div>
<div class="t" style="left:638.20px;top:711.08px;font-size:12.9px;line-height:12.9px;font-weight:400;color:#222;z-index:8;;transform:scaleX(0.985);transform-origin:0 0">24. 5. 2025 20:17</div>
<div class="t" style="left:788.30px;top:711.08px;font-size:12.9px;line-height:12.9px;font-weight:400;color:#222;z-index:8;">Podána</div>
<svg style="position:absolute;z-index:9;left:995.5px;top:709.9px" width="10" height="10" viewBox="0 0 10 10"><path d="M1.2 1.2 L8.8 8.8 M8.8 1.2 L1.2 8.8" stroke="#d0262c" stroke-width="2"/></svg>
<svg style="position:absolute;z-index:9;left:1135.5px;top:709.9px" width="10" height="10" viewBox="0 0 10 10"><path d="M1.2 1.2 L8.8 8.8 M8.8 1.2 L1.2 8.8" stroke="#d0262c" stroke-width="2"/></svg>
<svg style="position:absolute;z-index:9;left:1301.4px;top:709.9px" width="10" height="10" viewBox="0 0 10 10"><path d="M1.2 1.2 L8.8 8.8 M8.8 1.2 L1.2 8.8" stroke="#d0262c" stroke-width="2"/></svg>
<div style="position:absolute;left:180px;top:753px;width:1222px;height:1px;background:#dedede;z-index:8;"></div>
<svg style="position:absolute;z-index:9;left:191px;top:737.8px" width="18" height="6" viewBox="0 0 18 6"><circle cx="3.0" cy="3" r="1.75" fill="none" stroke="#1f74b4" stroke-width="1.3"/><circle cx="8.9" cy="3" r="1.75" fill="none" stroke="#1f74b4" stroke-width="1.3"/><circle cx="14.8" cy="3" r="1.75" fill="none" stroke="#1f74b4" stroke-width="1.3"/></svg>
<svg style="position:absolute;z-index:9;left:217.5px;top:732.5px" width="17" height="17" viewBox="0 0 17 17"><circle cx="8.4" cy="8.3" r="7.5" fill="none" stroke="#1f74b4" stroke-width="1.2"/><circle cx="8.1" cy="4.5" r="0.75" fill="#1f74b4"/><path d="M7.8 6.9 Q7.6 9.5 8 11.2 Q8.3 12.2 9.4 12.6" fill="none" stroke="#1f74b4" stroke-width="1.05"/></svg>
<div class="t" style="left:254.30px;top:736.08px;font-size:12.9px;line-height:12.9px;font-weight:400;color:#222;z-index:8;">007</div>
<div class="t" style="left:334.40px;top:736.08px;font-size:12.9px;line-height:12.9px;font-weight:400;color:#222;z-index:8;;transform:scaleX(0.995);transform-origin:0 0">Dodavatel - školení 4</div>
<div class="t" style="left:538.00px;top:736.08px;font-size:12.9px;line-height:12.9px;font-weight:400;color:#222;z-index:8;">12345678</div>
<div class="t" style="left:638.20px;top:736.08px;font-size:12.9px;line-height:12.9px;font-weight:400;color:#222;z-index:8;;transform:scaleX(0.985);transform-origin:0 0">24. 5. 2025 20:36</div>
<div class="t" style="left:788.30px;top:736.08px;font-size:12.9px;line-height:12.9px;font-weight:400;color:#222;z-index:8;">Podána po lhůtě</div>
<svg style="position:absolute;z-index:9;left:995.0px;top:734.9px" width="12" height="10" viewBox="0 0 12 10"><path d="M1 5 L4.2 8.2 L10.8 1.2" fill="none" stroke="#36b53c" stroke-width="2.2"/></svg>
<svg style="position:absolute;z-index:9;left:1135.5px;top:734.9px" width="10" height="10" viewBox="0 0 10 10"><path d="M1.2 1.2 L8.8 8.8 M8.8 1.2 L1.2 8.8" stroke="#d0262c" stroke-width="2"/></svg>
<svg style="position:absolute;z-index:9;left:1301.4px;top:734.9px" width="10" height="10" viewBox="0 0 10 10"><path d="M1.2 1.2 L8.8 8.8 M8.8 1.2 L1.2 8.8" stroke="#d0262c" stroke-width="2"/></svg>
<svg style="position:absolute;z-index:9;left:191px;top:762.8px" width="18" height="6" viewBox="0 0 18 6"><circle cx="3.0" cy="3" r="1.75" fill="none" stroke="#1f74b4" stroke-width="1.3"/><circle cx="8.9" cy="3" r="1.75" fill="none" stroke="#1f74b4" stroke-width="1.3"/><circle cx="14.8" cy="3" r="1.75" fill="none" stroke="#1f74b4" stroke-width="1.3"/></svg>
<svg style="position:absolute;z-index:9;left:217.5px;top:757.5px" width="17" height="17" viewBox="0 0 17 17"><circle cx="8.4" cy="8.3" r="7.5" fill="none" stroke="#1f74b4" stroke-width="1.2"/><circle cx="8.1" cy="4.5" r="0.75" fill="#1f74b4"/><path d="M7.8 6.9 Q7.6 9.5 8 11.2 Q8.3 12.2 9.4 12.6" fill="none" stroke="#1f74b4" stroke-width="1.05"/></svg>
<div class="t" style="left:254.30px;top:761.08px;font-size:12.9px;line-height:12.9px;font-weight:400;color:#222;z-index:8;">008</div>
<div class="t" style="left:334.40px;top:761.08px;font-size:12.9px;line-height:12.9px;font-weight:400;color:#222;z-index:8;;transform:scaleX(0.995);transform-origin:0 0">Dodavatel - školení 6</div>
<div class="t" style="left:538.00px;top:761.08px;font-size:12.9px;line-height:12.9px;font-weight:400;color:#222;z-index:8;">45359326</div>
<div class="t" style="left:638.20px;top:761.08px;font-size:12.9px;line-height:12.9px;font-weight:400;color:#222;z-index:8;;transform:scaleX(0.985);transform-origin:0 0">24. 5. 2025 20:29</div>
<div class="t" style="left:788.30px;top:761.08px;font-size:12.9px;line-height:12.9px;font-weight:400;color:#222;z-index:8;">Podána</div>
<svg style="position:absolute;z-index:9;left:995.5px;top:759.9px" width="10" height="10" viewBox="0 0 10 10"><path d="M1.2 1.2 L8.8 8.8 M8.8 1.2 L1.2 8.8" stroke="#d0262c" stroke-width="2"/></svg>
<svg style="position:absolute;z-index:9;left:1135.0px;top:759.9px" width="12" height="10" viewBox="0 0 12 10"><path d="M1 5 L4.2 8.2 L10.8 1.2" fill="none" stroke="#36b53c" stroke-width="2.2"/></svg>
<svg style="position:absolute;z-index:9;left:1301.4px;top:759.9px" width="10" height="10" viewBox="0 0 10 10"><path d="M1.2 1.2 L8.8 8.8 M8.8 1.2 L1.2 8.8" stroke="#d0262c" stroke-width="2"/></svg>

</body></html>
